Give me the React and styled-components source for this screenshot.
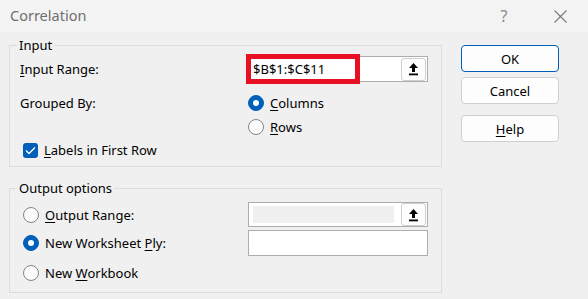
import React from "react";
import styled, { createGlobalStyle } from "styled-components";

const Global = createGlobalStyle`
  html, body { margin: 0; padding: 0; }
  body { background: #f0f0f0; font-family: "Noto Sans", "Liberation Sans", sans-serif; font-size: 13px; color: #000; }
  * { box-sizing: border-box; }
`;

const Dialog = styled.div`
  width: 588px;
  height: 299px;
  background: #f0f0f0;
  display: flex;
  flex-direction: column;
  overflow: hidden;
`;

const TitleBar = styled.div`
  height: 32px;
  background: #f3f3f3;
  display: flex;
  align-items: center;
  padding-left: 10px;
`;

const Title = styled.div`
  flex: 1;
  font-size: 14.5px;
  color: #707070;
  line-height: 20px;
  margin-top: -2px;
`;

const TitleButton = styled.div`
  width: 56px;
  height: 32px;
  display: flex;
  align-items: center;
  justify-content: center;
  color: #8a8a8a;
  font-size: 16px;
`;

const Body = styled.div`
  display: flex;
  padding: 5px 0 0 9px;
  gap: 19px;
`;

const LeftCol = styled.div`
  width: 433px;
  display: flex;
  flex-direction: column;
  gap: 13px;
`;

const Group = styled.fieldset`
  margin: 0;
  padding: 0;
  border: 1px solid #dcdcdc;
  min-width: 0;
`;

const Legend = styled.legend`
  margin-left: 7px;
  padding: 0 2px;
  line-height: 16px;
  height: 16px;
`;

const Content = styled.div`
  padding: ${p => p.$pad};
`;

const Row = styled.div`
  display: grid;
  grid-template-columns: ${p => p.$cols || "228px 180px"};
  align-items: center;
  height: ${p => p.$h}px;
  margin-top: ${p => p.$mt || 0}px;
`;

const Label = styled.div`
  white-space: nowrap;
  line-height: 18px;
`;

const U = styled.span`
  text-decoration: underline;
  text-underline-offset: 2px;
  text-decoration-thickness: 1px;
`;

const Choice = styled.div`
  display: flex;
  align-items: center;
  gap: 6px;
  white-space: nowrap;
`;

const Radio = styled.span`
  width: 16px;
  height: 16px;
  border-radius: 50%;
  flex: none;
  display: inline-flex;
  align-items: center;
  justify-content: center;
  background: ${p => (p.$on ? "#005fb8" : "#fbfbfb")};
  border: 1px solid ${p => (p.$on ? "#005fb8" : "#858585")};
  &::after {
    content: "";
    width: 6px;
    height: 6px;
    border-radius: 50%;
    background: #fff;
    display: ${p => (p.$on ? "block" : "none")};
  }
`;

const Check = styled.span`
  width: 15px;
  height: 15px;
  border-radius: 3px;
  background: #005fb8;
  flex: none;
  display: inline-flex;
  align-items: center;
  justify-content: center;
`;

const Field = styled.div`
  position: relative;
  height: ${p => p.$h}px;
  width: 180px;
  background: #fff;
  border: 1px solid #adadad;
  display: flex;
  align-items: center;
  padding: 0 1px 0 4px;
`;

const FieldText = styled.div`
  flex: 1;
  line-height: 18px;
`;

const Disabled = styled.div`
  flex: 1;
  height: 17px;
  background: #f0f0f0;
  margin-right: 7px;
`;

const PickBtn = styled.div`
  width: 25px;
  height: 23px;
  border: 1px solid #cfcfcf;
  border-radius: 3px;
  background: #fdfdfd;
  display: flex;
  align-items: center;
  justify-content: center;
  flex: none;
`;

const Highlight = styled.div`
  position: absolute;
  left: -3px;
  top: -3px;
  width: 114px;
  height: 30px;
  border: 5px solid #e81123;
  pointer-events: none;
`;

const RightCol = styled.div`
  width: 98px;
  display: flex;
  flex-direction: column;
  padding-top: 8px;
`;

const Button = styled.div`
  height: 27px;
  margin-top: ${p => p.$mt || 0}px;
  border-radius: 4px;
  background: #fdfdfd;
  border: 1px solid ${p => (p.$primary ? "#005fb8" : "#d0d0d0")};
  display: flex;
  align-items: center;
  justify-content: center;
  line-height: 18px;
`;

const Arrow = () => (
  <svg width="11" height="14" viewBox="0 0 11 14">
    <path d="M5.5 1 L10 6 L7 6 L7 10 L4 10 L4 6 L1 6 Z" fill="#000" />
    <rect x="1" y="11.5" width="9" height="1.8" fill="#000" />
  </svg>
);

export default function App() {
  return (
    <>
      <Global />
      <Dialog>
        <TitleBar>
          <Title>Correlation</Title>
          <TitleButton>?</TitleButton>
          <TitleButton>
            <svg width="13" height="13" viewBox="0 0 13 13">
              <path d="M0.5 0.5 L12.5 12.5 M12.5 0.5 L0.5 12.5" stroke="#7a7a7a" strokeWidth="1.1" />
            </svg>
          </TitleButton>
        </TitleBar>
        <Body>
          <LeftCol>
            <Group>
              <Legend>Input</Legend>
              <Content $pad="1px 0 5px 10px">
                <Row $h={30}>
                  <Label><U>I</U>nput Range:</Label>
                  <Field $h={26}>
                    <FieldText>$B$1:$C$11</FieldText>
                    <PickBtn><Arrow /></PickBtn>
                    <Highlight />
                  </Field>
                </Row>
                <Row $h={22} $mt={8}>
                  <Label>Grouped By:</Label>
                  <Choice><Radio $on /><span><U>C</U>olumns</span></Choice>
                </Row>
                <Row $h={22} $mt={2}>
                  <span />
                  <Choice><Radio /><span><U>R</U>ows</span></Choice>
                </Row>
                <Row $h={22} $mt={1} $cols="1fr">
                  <Choice style={{ paddingLeft: 3 }}>
                    <Check>
                      <svg width="11" height="9" viewBox="0 0 11 9">
                        <path d="M1 4.5 L4 7.5 L10 1.5" stroke="#fff" strokeWidth="1.3" fill="none" />
                      </svg>
                    </Check>
                    <span><U>L</U>abels in First Row</span>
                  </Choice>
                </Row>
              </Content>
            </Group>
            <Group>
              <Legend>Output options</Legend>
              <Content $pad="6px 0 8px 13px">
                <Row $h={25} $cols="225px 180px">
                  <Choice><Radio /><span><U>O</U>utput Range:</span></Choice>
                  <Field $h={25}>
                    <Disabled />
                    <PickBtn><Arrow /></PickBtn>
                  </Field>
                </Row>
                <Row $h={26} $mt={3} $cols="225px 180px">
                  <Choice><Radio $on /><span>New Worksheet <U>P</U>ly:</span></Choice>
                  <Field $h={26} />
                </Row>
                <Row $h={22} $mt={6} $cols="1fr">
                  <Choice><Radio /><span>New <U>W</U>orkbook</span></Choice>
                </Row>
              </Content>
            </Group>
          </LeftCol>
          <RightCol>
            <Button $primary>OK</Button>
            <Button $mt={5}>Cancel</Button>
            <Button $mt={11}><span><U>H</U>elp</span></Button>
          </RightCol>
        </Body>
      </Dialog>
    </>
  );
}
